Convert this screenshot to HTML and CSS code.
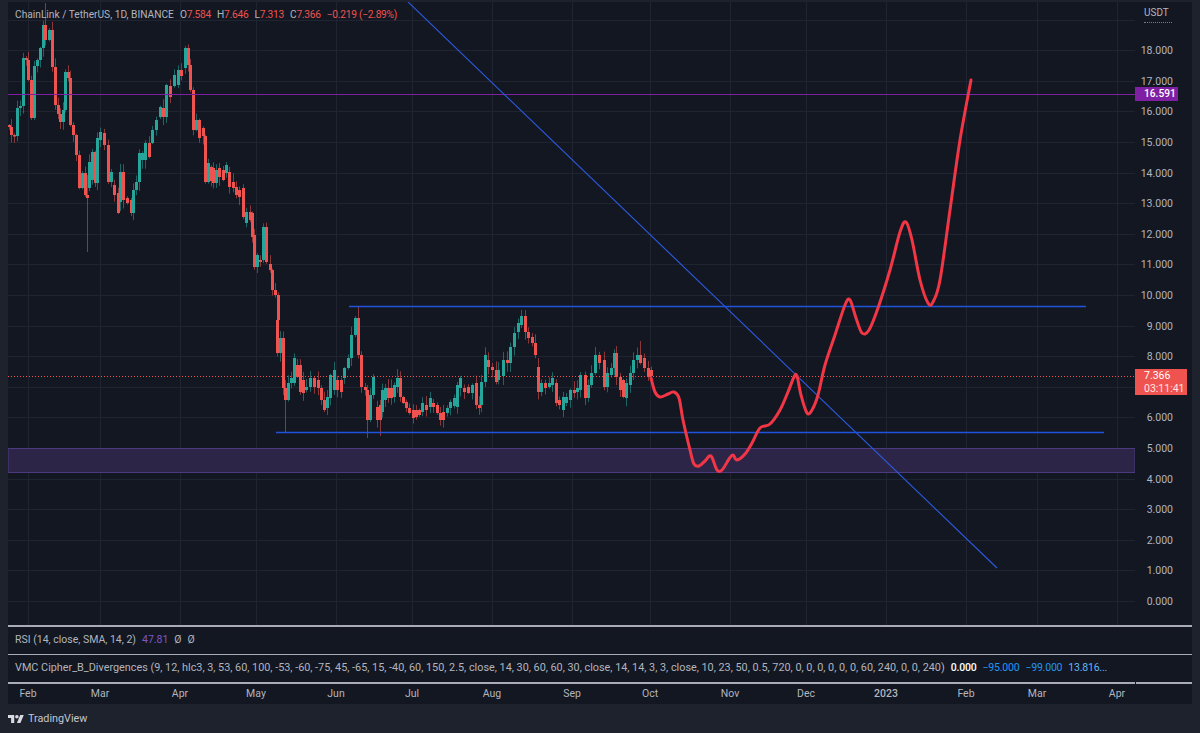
FILE: index.html
```html
<!DOCTYPE html>
<html lang="en">
<head>
    <meta charset="UTF-8">
    <title>LINKUSDT Chart</title>
    <link rel="stylesheet" href="styles.css">
</head>
<body>
    <div class="frame">
        <div class="main-pane">
            <svg class="plot" id="plot" viewBox="8 2 1127 623" width="1127" height="623"></svg>
            <div class="legend">
                <span>ChainLink / TetherUS, 1D, BINANCE</span>
                <span class="ohlc">
                    <span>O<b>7.584</b></span>
                    <span>H<b>7.646</b></span>
                    <span>L<b>7.313</b></span>
                    <span>C<b>7.366</b></span>
                    <b>−0.219 (−2.89%)</b>
                </span>
            </div>
            <div class="price-scale" id="priceScale">
                <div class="currency">USDT</div>
                <div class="tag tag-purple">16.591</div>
                <div class="tag tag-red">7.366<span>03:11:41</span></div>
            </div>
        </div>
        <div class="study study-rsi">
            <span>RSI (14, close, SMA, 14, 2)</span>
            <span class="val-purple">47.81</span>
            <span>Ø</span>
            <span>Ø</span>
        </div>
        <div class="study study-vmc">
            <span class="vmc-name">VMC Cipher_B_Divergences (9, 12, hlc3, 3, 53, 60, 100, -53, -60, -75, 45, -65, 15, -40, 60, 150, 2.5, close, 14, 30, 60, 60, 30, close, 14, 14, 3, 3, close, 10, 23, 50, 0.5, 720, 0, 0, 0, 0, 0, 0, 60, 240, 0, 0, 240)</span>
            <span class="val-white">0.000</span>
            <span class="val-blue">−95.000</span>
            <span class="val-blue">−99.000</span>
            <span class="val-sky">13.816...</span>
        </div>
        <div class="time-axis" id="timeAxis"></div>
    </div>
    <div class="footer">
        <svg class="tv-logo" viewBox="0 4 36 18" width="16" height="8">
            <path d="M14 22H7V11H0V4h14v18zM28 22h-8l7.5-18h8L28 22z"/>
            <circle cx="20" cy="8" r="4"/>
        </svg>
        <span>TradingView</span>
    </div>
    <script src="chart.js"></script>
</body>
</html>
```

FILE: styles.css
```css
:root {
    --bg-outer: #1e222d;
    --bg-chart: #131722;
    --text: #b2b5be;
    --red: #ef5350;
    --sep: #a9acb6;
}

body {
    margin: 0;
    height: 733px;
    overflow: hidden;
    background-color: var(--bg-outer);
    color: var(--text);
    font-family: Roboto, "Liberation Sans", sans-serif;
    font-size: 10.5px;
}

.frame {
    margin: 2px 8px 0 8px;
    width: 1184px;
    height: 702px;
    display: flex;
    flex-direction: column;
    background-color: var(--bg-chart);
}

.main-pane {
    position: relative;
    height: 623px;
    display: flex;
    flex-shrink: 0;
}

.plot {
    display: block;
    flex-shrink: 0;
}

.legend {
    position: absolute;
    left: 7px;
    top: 6px;
    display: flex;
    gap: 6px;
    font-size: 10.2px;
    line-height: 13px;
    white-space: nowrap;
}

.legend b {
    font-weight: 400;
    color: var(--red);
}

.ohlc {
    display: flex;
    gap: 6px;
    letter-spacing: -0.25px;
}

.price-scale {
    position: relative;
    width: 57px;
    overflow: hidden;
}

.price-label {
    position: absolute;
    right: 19px;
    line-height: 12px;
    transform: translateY(-6px);
}

.currency {
    position: absolute;
    left: 0;
    top: 0;
    width: 100%;
    padding: 5px 0 0 9px;
    box-sizing: border-box;
    font-size: 10px;
    line-height: 12px;
}

/* bottoms of the 19.000 label, cut off under the currency header */
.currency::after {
    content: "";
    display: block;
    width: 28px;
    margin-top: 3px;
    border-top: 1px dotted #777b86;
}

.tag {
    position: absolute;
    left: 0;
    color: #fff;
    line-height: 13px;
    padding-left: 9px;
    box-sizing: border-box;
}

.tag-purple {
    top: 85px;
    width: 43px;
    height: 14px;
    background-color: #7f1fa3;
    font-size: 10.2px;
    font-weight: 500;
}

.tag-red {
    top: 367px;
    width: 52px;
    height: 26px;
    background-color: #ef5350;
}

.tag-red span {
    display: block;
    color: #ffe3e3;
}

.study {
    display: flex;
    align-items: center;
    gap: 6px;
    padding-left: 7px;
    padding-bottom: 2px;
    height: 25px;
    flex-shrink: 0;
    white-space: nowrap;
    border-top: 1px solid var(--sep);
}

.study-rsi {
    border-top-width: 2px;
}

.study-vmc {
    letter-spacing: -0.2px;
}

.vmc-name {
    font-size: 10.83px;
    letter-spacing: 0;
}

.val-purple {
    color: #7e57c2;
}

.val-white {
    color: #fff;
    font-weight: 500;
}

.val-blue {
    color: #2196f3;
}

.val-sky {
    color: #64b5f6;
}

.time-axis {
    position: relative;
    height: 20px;
    flex-shrink: 0;
    border-top: 2px solid var(--sep);
}

/* the separator breaks where the price scale starts */
.time-axis::after {
    content: "";
    position: absolute;
    left: 1127px;
    top: -2px;
    width: 1px;
    height: 2px;
    background-color: var(--bg-chart);
}

.time-label {
    position: absolute;
    top: 4px;
    line-height: 12px;
    transform: translateX(-50%);
}

.time-label.year {
    font-weight: 500;
}

.footer {
    display: flex;
    align-items: center;
    gap: 4px;
    height: 29px;
    padding-left: 8px;
    font-size: 10.8px;
    color: #c4c6ce;
}

.tv-logo {
    fill: #d8dae0;
}
```

FILE: chart.js
```js
// page pixels are used everywhere in the plot, viewBox starts at 8,2
const NS = 'http://www.w3.org/2000/svg';
const plot = document.getElementById('plot');
const priceScale = document.getElementById('priceScale');
const timeAxis = document.getElementById('timeAxis');

const priceY = p => 601 - 30.6 * p;

const months = [
    ['Feb', 28], ['Mar', 100], ['Apr', 180], ['May', 256], ['Jun', 336],
    ['Jul', 412], ['Aug', 492], ['Sep', 572], ['Oct', 650], ['Nov', 730],
    ['Dec', 806], ['2023', 886], ['Feb', 966], ['Mar', 1037], ['Apr', 1117]
];

// x, open y, close y, optional wick top, optional wick bottom
const candles = [
    [9,125,127],[11,127,135],[14,135,136],[17,136,108],[20,108,106],[23,106,58],[26,58,60],[28,60,80],
    [31,80,118],[34,118,66],[37,66,60],[40,60,48],[43,48,25],[45,25,40,3],[49,40,30],[52,30,67],
    [55,67,105],[58,105,114],[60,114,122],[63,122,110],[65,110,72],[68,72,78],[70,78,125],[73,125,135],
    [76,135,155],[79,155,188],[82,188,173],[85,173,195],[87,195,198,175,252],[89,188,162],[92,180,152],[95,152,183],
    [97,183,138],[100,140,132],[104,133,145],[108,145,182],[111,182,172],[114,185,195],[118,193,213],[120,202,172],
    [123,172,200],[127,198,203],[131,200,213],[133,213,190],[136,190,182],[139,182,153],[142,160,153],[145,160,143],
    [149,143,157],[152,143,130],[156,130,120],[160,117,107],[163,108,117],[166,117,85],[170,86,97],[174,86,75],
    [178,85,70],[181,70,76],[185,68,48],[188,48,65],[190,65,90],[193,90,130],[196,130,120],[199,120,138],
    [203,128,136],[205,136,182],[208,182,163],[211,167,181],[213,168,183],[216,183,170],[219,168,177],[223,170,180],
    [226,173,165],[229,172,187],[233,182,188],[236,187,195],[239,190,197],[243,188,217],[246,223,212],[250,212,220],
    [252,213,237],[254,235,267],[257,267,255],[260,260,262],[263,260,227],[266,227,262],[270,264,270],[272,270,290],
    [275,290,295],[278,295,320],[277,320,353],[280,353,338],[283,338,388],[285,388,400,380,432],[288,400,383],[291,383,378],
    [294,383,358],[297,365,377],[300,365,392],[303,380,393],[306,390,387],[310,387,378],[314,378,387],[318,380,388],
    [321,388,400],[324,400,410],[327,408,397],[330,398,375],[334,390,370],[337,380,390],[341,380,392],[344,378,368],
    [348,368,358],[351,358,335],[355,335,318],[358,318,355,306],[361,355,387],[365,387,390],[367,390,420,385,438],[370,420,395],
    [373,395,377],[377,407,420],[380,405,420,400,436],[382,412,390],[385,400,388],[388,388,398],[391,388,398],[394,397,385],
    [397,387,378],[400,378,397],[403,397,403],[406,402,408],[409,408,413],[413,410,418],[416,410,417],[419,410,415],
    [422,412,403],[426,405,410],[430,407,398],[433,403,407],[437,405,413],[440,413,420],[443,412,420],[447,413,408],
    [450,408,402],[454,406,398],[457,407,385],[460,388,378],[464,388,392],[468,387,393],[472,393,385],[476,383,405],
    [479,405,408],[481,405,382],[485,382,355],[488,360,367],[492,367,370],[496,370,382],[498,380,370],[503,376,360],
    [507,360,363],[510,363,347],[514,347,333],[518,332,323],[521,325,316,310],[525,316,332],[528,332,338],[532,337,343],
    [535,343,355],[538,367,392],[541,392,383],[545,383,388],[549,387,383],[552,385,378],[556,383,403],[559,400,405],
    [563,410,397],[566,403,397],[570,400,390],[574,390,393],[577,392,388],[580,390,375],[585,375,398],[588,398,385],
    [591,385,373],[595,373,355],[599,355,363],[604,360,387],[607,387,373],[611,375,368],[614,368,353],[616,353,377],
    [620,377,390],[623,380,397],[626,398,383],[630,385,373],[633,373,360],[637,360,355],[640,355,363,341],[644,358,368],
    [648,368,377],[651,370,376]
];

const curvePts = [
    [651,378],[655,392],[660,397],[668,394],[674,392],[679,398],[683,420],[690,450],[694,464],[699,466],
    [705,461],[711,456],[717,470],[722,470],[729,459],[733,455],[737,460],[745,454],[752,443],[760,428],
    [770,424],[780,410],[788,392],[794,377],[797,376],[801,395],[807,413],[812,410],[818,395],[825,365],
    [835,335],[845,305],[850,300],[856,318],[862,333],[869,330],[878,308],[890,270],[900,232],[906,222],
    [912,240],[920,280],[928,303],[933,302],[940,280],[950,210],[960,140],[971,80]
];

function add(tag, attrs) {
    const el = document.createElementNS(NS, tag);
    for (const k in attrs) el.setAttribute(k, attrs[k]);
    plot.appendChild(el);
    return el;
}

function line(x1, y1, x2, y2, stroke, width, extra) {
    return add('line', Object.assign({ x1, y1, x2, y2, stroke, 'stroke-width': width }, extra));
}

// small seeded random so wicks stay the same on every load
let seed = 17;
function rnd() {
    seed = (seed * 16807) % 2147483647;
    return seed / 2147483647;
}

// grid
for (let p = 0; p <= 19; p++) {
    const y = Math.round(priceY(p)) + 0.5;
    line(8, y, 1135, y, '#1f2430', 1);
}
months.forEach(m => line(m[1] + 0.5, 2, m[1] + 0.5, 625, '#1f2430', 1));

// purple zone
add('rect', { x: 8, y: 448.5, width: 1127, height: 24, fill: '#2d2548', stroke: '#4c3a80', 'stroke-width': 1 });

// candles
candles.forEach(c => {
    const [x, open, close, hi, lo] = c;
    const color = close < open ? '#26a69a' : '#ef5350';
    const top = Math.min(open, close);
    const bottom = Math.max(open, close);
    const wickTop = hi !== undefined ? hi : top - 1 - rnd() * 8;
    const wickBottom = lo !== undefined ? lo : bottom + 1 + rnd() * 8;
    line(x + 0.5, wickTop, x + 0.5, wickBottom, color, 1, { opacity: 0.55 });
    add('rect', { x: x - 1, y: top, width: 3, height: Math.max(bottom - top, 1.5), fill: color });
});

// drawings
line(8, 94.5, 1135, 94.5, '#7f1fa3', 1);
line(8, 376.5, 1135, 376.5, '#ef5350', 1, { 'stroke-dasharray': '1 2' });
line(406, 0, 997, 568, '#2c5ae0', 1.1);
line(349, 306.5, 1086, 306.5, '#2053dc', 1.3);
line(276, 432.5, 1104, 432.5, '#2053dc', 1.3);

// catmull-rom through the forecast points
let d = `M${curvePts[0][0]} ${curvePts[0][1]}`;
for (let i = 0; i < curvePts.length - 1; i++) {
    const p0 = curvePts[Math.max(i - 1, 0)];
    const p1 = curvePts[i];
    const p2 = curvePts[i + 1];
    const p3 = curvePts[Math.min(i + 2, curvePts.length - 1)];
    const c1x = p1[0] + (p2[0] - p0[0]) / 6;
    const c1y = p1[1] + (p2[1] - p0[1]) / 6;
    const c2x = p2[0] - (p3[0] - p1[0]) / 6;
    const c2y = p2[1] - (p3[1] - p1[1]) / 6;
    d += `C${c1x} ${c1y} ${c2x} ${c2y} ${p2[0]} ${p2[1]}`;
}
add('path', { d, fill: 'none', stroke: '#f23645', 'stroke-width': 3, 'stroke-linecap': 'round' });

// price labels, 7.000 sits under the last price tag and 19.000 under the header
for (let p = 0; p <= 18; p++) {
    if (p === 7) continue;
    const el = document.createElement('div');
    el.className = 'price-label';
    el.style.top = (priceY(p) - 1) + 'px';
    el.textContent = p.toFixed(3);
    priceScale.appendChild(el);
}

// time labels
months.forEach(m => {
    const el = document.createElement('div');
    el.className = m[0] === '2023' ? 'time-label year' : 'time-label';
    el.style.left = (m[1] - 8) + 'px';
    el.textContent = m[0];
    timeAxis.appendChild(el);
});
```
